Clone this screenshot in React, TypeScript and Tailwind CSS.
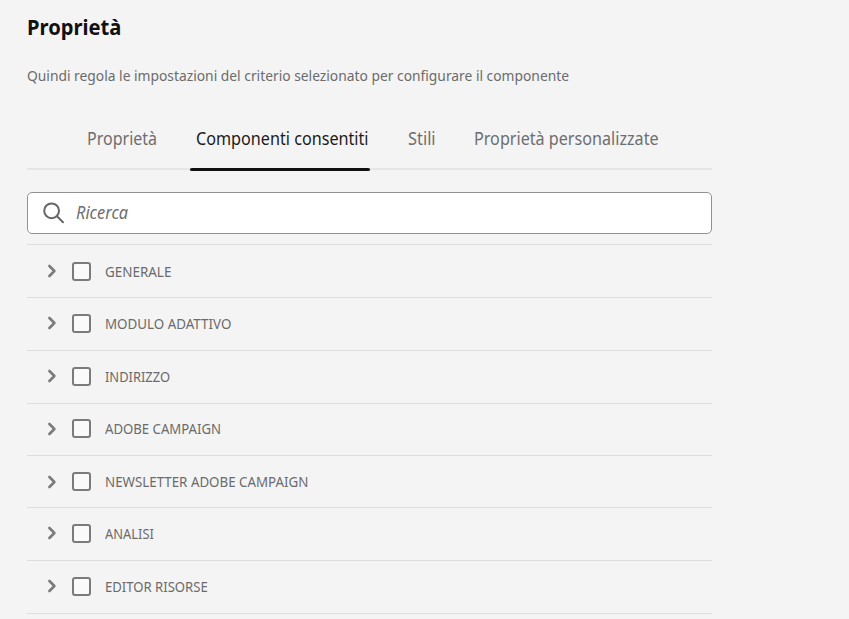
const tabs = [
  { label: 'Proprietà', box: 'ml-[60px] w-[70px]', text: 'text-[#6e6e6e]', scale: 'scale-x-[0.89]' },
  { label: 'Componenti consentiti', box: 'ml-[39px] w-[173px]', text: 'text-[#1b1b1b]', scale: 'scale-x-[0.898]' },
  { label: 'Stili', box: 'ml-[39px] w-[28px]', text: 'text-[#6e6e6e]', scale: 'scale-x-[0.91]' },
  { label: 'Proprietà personalizzate', box: 'ml-[38px] w-[185px]', text: 'text-[#6e6e6e]', scale: 'scale-x-[0.897]' },
];

const groups = [
  { label: 'GENERALE', height: 'h-[53px]', scale: 'scale-x-[0.995]' },
  { label: 'MODULO ADATTIVO', height: 'h-[53px] pb-[2px]', scale: 'scale-x-[0.99]' },
  { label: 'INDIRIZZO', height: 'h-[53px] pb-[2px]', scale: 'scale-x-[0.955]' },
  { label: 'ADOBE CAMPAIGN', height: 'h-[52px] pb-[2px]', scale: 'scale-x-[0.975]' },
  { label: 'NEWSLETTER ADOBE CAMPAIGN', height: 'h-[52px]', scale: 'scale-x-[0.987]' },
  { label: 'ANALISI', height: 'h-[53px] pb-[2px]', scale: 'scale-x-[0.955]' },
  { label: 'EDITOR RISORSE', height: 'h-[53px] pb-[2px]', scale: 'scale-x-[0.97]' },
];

function GroupRow({ label, height, scale }: { label: string; height: string; scale: string }) {
  return (
    <li className={`flex items-center border-b border-[#dedede] pl-5 ${height}`}>
      <svg className="h-[14px] w-[10px]" viewBox="0 0 10 14" fill="none" stroke="#7b7b7b" strokeWidth="2.6" strokeLinecap="round" strokeLinejoin="round">
        <path d="M2.4 2 7.4 7l-5 5" />
      </svg>
      <span className="ml-[15px] size-[19px] rounded-[3px] border-2 border-[#7b7b7b] bg-[#fafafa]" />
      <span className={`ml-[14px] origin-left whitespace-nowrap pt-[2px] text-[13.5px] text-[#6b6b6b] ${scale}`}>{label}</span>
    </li>
  );
}

export default function App() {
  return (
    <main className="h-[619px] overflow-hidden bg-[#f4f4f4] pl-[27px] font-['Noto_Sans',sans-serif]">
      <div className="w-[685px]">
        <h1 className="h-[55px] origin-left scale-x-[0.96] pt-[12px] text-[21px] leading-[30px] font-bold text-[#111111]">Proprietà</h1>
        <p className="h-[57px] origin-left scale-x-[0.921] whitespace-nowrap pt-[10px] text-[15px] leading-[20px] text-[#6b6b6b]">
          Quindi regola le impostazioni del criterio selezionato per configurare il componente
        </p>
        <nav className="flex h-[58px] border-b-2 border-[#e6e6e6]">
          {tabs.map((tab, i) => (
            <div key={tab.label} className={`relative h-[56px] shrink-0 pt-[13px] ${tab.box}`}>
              <span className={`block origin-left whitespace-nowrap text-[18px] leading-[26px] ${tab.scale} ${tab.text}`}>{tab.label}</span>
              {i === 1 && <span className="absolute top-[56px] -right-[1px] -left-[6px] h-[3px] rounded-full bg-[#111111]" />}
            </div>
          ))}
        </nav>
        <div className="mt-[22px] flex h-[42px] items-center rounded-[5px] border border-[#929292] bg-white pl-[15px]">
          <svg className="size-[22px]" viewBox="0 0 22 22" fill="none" stroke="#666666" strokeWidth="2" strokeLinecap="round">
            <circle cx="8.6" cy="8.8" r="7.4" />
            <path d="m14 14.2 6 6" />
          </svg>
          <span className="ml-[11px] origin-left scale-x-[0.91] pb-[2px] text-[18px] text-[#6e6e6e] italic">Ricerca</span>
        </div>
        <ul className="mt-[10px] border-t border-[#dedede]">
          {groups.map((group) => (
            <GroupRow key={group.label} {...group} />
          ))}
        </ul>
      </div>
    </main>
  );
}
